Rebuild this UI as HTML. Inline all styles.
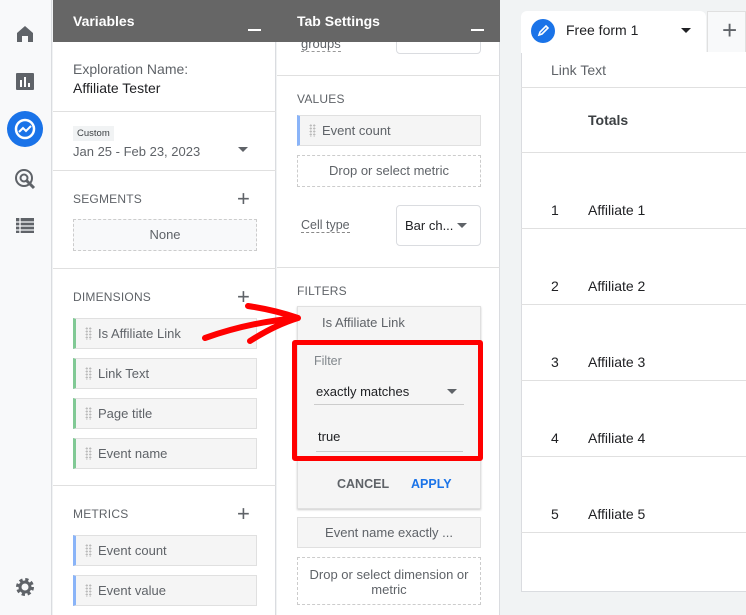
<!DOCTYPE html>
<html><head><style>
*{box-sizing:border-box;margin:0;padding:0}
body{width:746px;height:615px;overflow:hidden;background:#f1f3f4;font-family:"Liberation Sans",Arial,sans-serif;position:relative;color:#202124}
.a{position:absolute}
.t{font-size:14px;color:#5f6368}
.hd{font-size:12px;color:#5f6368;letter-spacing:.2px}
.chip{position:absolute;background:#f5f5f5;border:1px solid #e0e0e0;font-size:13px;color:#5f6368;padding-left:22px;line-height:29px}
.chip.g{border-left:3px solid #81c995}
.chip.b{border-left:3px solid #8ab4f8}
.chip:before{content:"";position:absolute;left:9px;top:8px;width:7px;height:13px;background-image:radial-gradient(circle,#bbb 1px,transparent 1.2px);background-size:3.5px 3px}
.dash{position:absolute;border:1px dashed #ccc;text-align:center;font-size:13px;color:#5f6368}
.hr{position:absolute;height:1px;background:#e0e0e0}
</style></head><body>
<div class="a" style="left:0;top:0;width:52px;height:615px;background:#f8f9fa;border-right:1px solid #dadce0"></div>
<svg class="a" style="left:0;top:0" width="52" height="615">
<path d="M17 42V33l8-7 8 7v9h-5v-6h-6v6z" fill="#5f6368"/>
<rect x="16" y="73" width="18" height="17" rx="1" fill="#5f6368"/><rect x="20" y="80" width="2" height="7" fill="#fff"/><rect x="24" y="77" width="2" height="10" fill="#fff"/><rect x="28" y="83" width="2" height="4" fill="#fff"/>
<circle cx="25" cy="129" r="18" fill="#1a73e8"/><circle cx="25" cy="129" r="9" fill="none" stroke="#fff" stroke-width="2.5"/><path d="M19 132l4-4 3 3 5-5" fill="none" stroke="#fff" stroke-width="2"/>
<circle cx="24" cy="178" r="8" fill="none" stroke="#5f6368" stroke-width="2"/><circle cx="24" cy="178" r="3.5" fill="none" stroke="#5f6368" stroke-width="2"/><path d="M26 180l8 8" stroke="#5f6368" stroke-width="3"/>
<rect x="16" y="218" width="18" height="15" fill="#5f6368"/><path d="M16 222h18M16 226h18M16 230h18M20 218v15" stroke="#f8f9fa" stroke-width="1.3"/>
<circle cx="25" cy="587" r="7" fill="none" stroke="#5f6368" stroke-width="4" stroke-dasharray="3 2.5"/><circle cx="25" cy="587" r="5" fill="none" stroke="#5f6368" stroke-width="3"/>
</svg>
<div class="a" style="left:53px;top:0;width:223px;height:615px;background:#fff;border-right:1px solid #dadce0"></div>
<div class="a" style="left:53px;top:0;width:224px;height:42px;background:#666"></div>
<div class="a" style="left:73px;top:13px;color:#fff;font-weight:bold;font-size:14px">Variables</div>
<div class="a" style="left:248px;top:29px;width:13px;height:2px;background:#fff"></div>
<div class="a t" style="left:73px;top:61px">Exploration Name:</div>
<div class="a" style="left:73px;top:80px;font-size:14px">Affiliate Tester</div>
<div class="hr" style="left:53px;top:111px;width:223px"></div>
<div class="a" style="left:73px;top:126px;background:#f1f3f4;font-size:9.5px;color:#3c4043;padding:2px 4px">Custom</div>
<div class="a t" style="left:73px;top:144px;font-size:13px">Jan 25 - Feb 23, 2023</div>
<div class="a" style="left:238px;top:147px;border:5px solid transparent;border-top-color:#5f6368"></div>
<div class="hr" style="left:53px;top:170px;width:223px"></div>
<div class="a hd" style="left:73px;top:192px">SEGMENTS</div>
<div class="a" style="left:237px;top:190px;color:#5f6368;font-size:22px;line-height:18px">+</div>
<div class="dash" style="left:73px;top:219px;width:184px;height:32px;line-height:30px;background:#f8f9fa">None</div>
<div class="hr" style="left:53px;top:268px;width:223px"></div>
<div class="a hd" style="left:73px;top:290px">DIMENSIONS</div>
<div class="a" style="left:237px;top:288px;color:#5f6368;font-size:22px;line-height:18px">+</div>
<div class="chip g" style="left:73px;top:318px;width:184px;height:31px">Is Affiliate Link</div>
<div class="chip g" style="left:73px;top:358px;width:184px;height:31px">Link Text</div>
<div class="chip g" style="left:73px;top:398px;width:184px;height:31px">Page title</div>
<div class="chip g" style="left:73px;top:438px;width:184px;height:31px">Event name</div>
<div class="hr" style="left:53px;top:485px;width:223px"></div>
<div class="a hd" style="left:73px;top:507px">METRICS</div>
<div class="a" style="left:237px;top:505px;color:#5f6368;font-size:22px;line-height:18px">+</div>
<div class="chip b" style="left:73px;top:535px;width:184px;height:31px">Event count</div>
<div class="chip b" style="left:73px;top:575px;width:184px;height:31px">Event value</div>
<div class="a" style="left:277px;top:0;width:223px;height:615px;background:#fff;border-right:1px solid #dadce0"></div>
<div class="a" style="left:396px;top:30px;width:85px;height:24px;border:1px solid #dadce0;border-radius:4px"></div>
<div class="a t" style="left:301px;top:36px;font-size:13px;border-bottom:1px dashed #999">groups</div>
<div class="a" style="left:277px;top:0;width:223px;height:42px;background:#666"></div>
<div class="a" style="left:297px;top:13px;color:#fff;font-weight:bold;font-size:14px">Tab Settings</div>
<div class="a" style="left:471px;top:29px;width:13px;height:2px;background:#fff"></div>
<div class="hr" style="left:277px;top:75px;width:223px"></div>
<div class="a hd" style="left:297px;top:92px">VALUES</div>
<div class="chip b" style="left:297px;top:115px;width:184px;height:31px">Event count</div>
<div class="dash" style="left:297px;top:155px;width:184px;height:32px;line-height:30px">Drop or select metric</div>
<div class="a t" style="left:301px;top:218px;font-size:12.5px;border-bottom:1px dashed #888">Cell type</div>
<div class="a" style="left:396px;top:205px;width:85px;height:41px;border:1px solid #dadce0;border-radius:4px;font-size:13px;padding:12px 8px">Bar ch...</div>
<div class="a" style="left:457px;top:223px;border:5px solid transparent;border-top-color:#5f6368"></div>
<div class="hr" style="left:277px;top:267px;width:223px"></div>
<div class="a hd" style="left:297px;top:284px">FILTERS</div>
<div class="a" style="left:297px;top:306px;width:184px;height:203px;background:#f5f5f5;border:1px solid #e0e0e0;box-shadow:0 1px 2px rgba(0,0,0,.2)"></div>
<div class="a t" style="left:322px;top:315px;font-size:13px">Is Affiliate Link</div>
<div class="a t" style="left:314px;top:354px;font-size:12.5px;color:#80868b">Filter</div>
<div class="a" style="left:316px;top:384px;font-size:13px">exactly matches</div>
<div class="a" style="left:447px;top:389px;border:5px solid transparent;border-top-color:#5f6368"></div>
<div class="hr" style="left:314px;top:404px;width:150px;background:#ccc"></div>
<div class="a" style="left:318px;top:429px;font-size:13px">true</div>
<div class="hr" style="left:316px;top:451px;width:147px;background:#ccc"></div>
<div class="a" style="left:292px;top:340px;width:191px;height:121px;border:5px solid #f00;border-radius:3px"></div>
<div class="a" style="left:337px;top:477px;font-size:12.5px;font-weight:bold;color:#5f6368">CANCEL</div>
<div class="a" style="left:411px;top:477px;font-size:12.5px;font-weight:bold;color:#1a73e8">APPLY</div>
<div class="a" style="left:297px;top:517px;width:184px;height:31px;background:#f5f5f5;border:1px solid #e0e0e0;font-size:13px;color:#5f6368;line-height:29px;text-align:center">Event name exactly ...</div>
<div class="dash" style="left:297px;top:557px;width:184px;height:48px;padding-top:9px;line-height:15px">Drop or select dimension or metric</div>
<div class="a" style="left:521px;top:52px;width:225px;height:540px;background:#fff;border-left:1px solid #dadce0;border-bottom:1px solid #dadce0"></div>
<div class="a" style="left:521px;top:11px;width:185px;height:42px;background:#fff;border-radius:6px 6px 0 0"></div>
<div class="a" style="left:707px;top:11px;width:39px;height:41px;background:#f8f9fa;border:1px solid #e0e0e0;border-bottom:none"></div>
<div class="a" style="left:722px;top:18px;font-size:26px;color:#5f6368;line-height:24px">+</div>
<svg class="a" style="left:531px;top:19px" width="24" height="24"><circle cx="12" cy="12" r="12" fill="#1a73e8"/><path d="M8 16l1-3 6-6 2 2-6 6z" fill="none" stroke="#fff" stroke-width="1.6"/></svg>
<div class="a" style="left:566px;top:22px;font-size:14px">Free form 1</div>
<div class="a" style="left:681px;top:28px;border:5px solid transparent;border-top-color:#202124"></div>
<div class="a t" style="left:551px;top:62px">Link Text</div>
<div class="hr" style="left:521px;top:87px;width:225px"></div>
<div class="a" style="left:588px;top:112px;font-size:14px;font-weight:bold;color:#3c4043">Totals</div>
<div class="hr" style="left:521px;top:152px;width:225px"></div>
<div class="a" style="left:551px;top:202px;font-size:14px">1</div><div class="a" style="left:588px;top:202px;font-size:14px">Affiliate 1</div>
<div class="hr" style="left:521px;top:228px;width:225px"></div>
<div class="a" style="left:551px;top:278px;font-size:14px">2</div><div class="a" style="left:588px;top:278px;font-size:14px">Affiliate 2</div>
<div class="hr" style="left:521px;top:304px;width:225px"></div>
<div class="a" style="left:551px;top:354px;font-size:14px">3</div><div class="a" style="left:588px;top:354px;font-size:14px">Affiliate 3</div>
<div class="hr" style="left:521px;top:380px;width:225px"></div>
<div class="a" style="left:551px;top:430px;font-size:14px">4</div><div class="a" style="left:588px;top:430px;font-size:14px">Affiliate 4</div>
<div class="hr" style="left:521px;top:456px;width:225px"></div>
<div class="a" style="left:551px;top:506px;font-size:14px">5</div><div class="a" style="left:588px;top:506px;font-size:14px">Affiliate 5</div>
<div class="hr" style="left:521px;top:532px;width:225px"></div>
<svg class="a" style="left:0;top:0" width="746" height="615"><path d="M205 338Q250 322 298 318M248 306Q275 310 298 318Q275 325 250 341" fill="none" stroke="#f00" stroke-width="6" stroke-linecap="round" stroke-linejoin="round"/></svg>
</body></html>
